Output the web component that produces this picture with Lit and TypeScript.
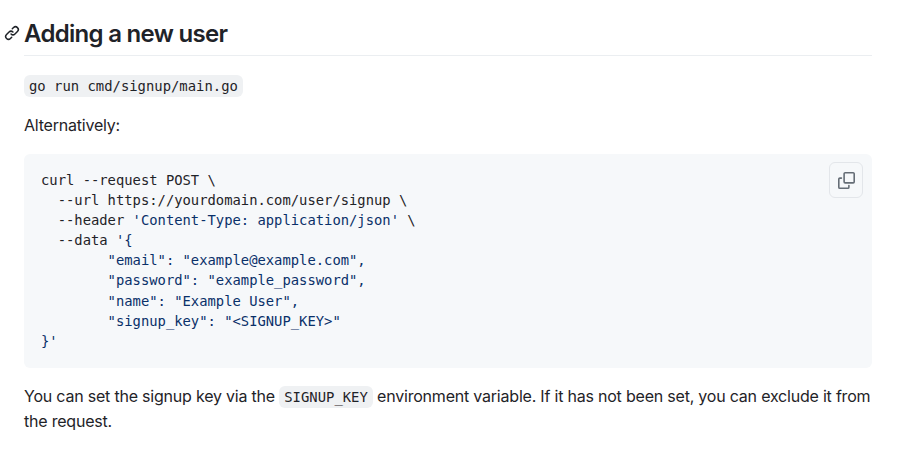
import { LitElement, html, css } from "lit";
import { customElement } from "lit/decorators.js";

@customElement("app-root")
export class AppRoot extends LitElement {
  static styles = css`
    :host {
      display: block;
      width: 899px;
      height: 459px;
      box-sizing: border-box;
      padding: 16px 27px 0 24px;
      background: #fff;
      color: #1f2328;
      font-family: Inter, "Liberation Sans", sans-serif;
      font-size: 16px;
      line-height: 24px;
      letter-spacing: -0.21px;
      overflow: hidden;
    }
    h2 {
      position: relative;
      margin: 0 0 16px;
      height: 34px;
      padding-bottom: 5px;
      border-bottom: 1px solid #d8dee480;
      font-size: 24px;
      line-height: 36px;
      font-weight: 600;
      letter-spacing: -0.7px;
    }
    .anchor {
      position: absolute;
      left: -20px;
      top: 9px;
      width: 16px;
      height: 16px;
      fill: #1f2328;
    }
    p {
      margin: 0 0 16px;
    }
    .cmd {
      height: 24px;
      margin-bottom: 17px;
    }
    .cmd code {
      vertical-align: -1px;
    }
    .alt {
      margin-bottom: 17px;
    }
    code,
    pre {
      font-family: "DejaVu Sans Mono", monospace;
      letter-spacing: 0;
    }
    code {
      background: #eff1f3;
      border-radius: 6px;
      padding: 3px 5px;
      font-size: 13.88px;
    }
    .block {
      position: relative;
      background: #f6f8fa;
      border-radius: 6px;
      padding: 16px 17px 0;
      margin-bottom: 16px;
      height: 214px;
      box-sizing: border-box;
    }
    pre {
      margin: 0;
      font-size: 13.83px;
      line-height: 20.1px;
      color: #1f2328;
    }
    .s {
      color: #0a3069;
    }
    .copy {
      position: absolute;
      top: 8px;
      right: 9px;
      width: 34px;
      height: 36px;
      box-sizing: border-box;
      display: flex;
      align-items: center;
      justify-content: center;
      border: 1px solid #e3e6ea;
      border-radius: 6px;
      background: #f6f8fa;
    }
    .copy svg {
      width: 17px;
      height: 17px;
      fill: #656d76;
    }
  `;

  render() {
    return html`
      <h2>
        <svg class="anchor" viewBox="0 0 16 16">
          <path d="m7.775 3.275 1.25-1.25a3.5 3.5 0 1 1 4.95 4.95l-2.5 2.5a3.5 3.5 0 0 1-4.95 0 .751.751 0 0 1 .018-1.042.751.751 0 0 1 1.042-.018 1.998 1.998 0 0 0 2.83 0l2.5-2.5a2.002 2.002 0 0 0-2.83-2.83l-1.25 1.25a.751.751 0 0 1-1.042-.018.751.751 0 0 1-.018-1.042Zm-4.69 9.64a1.998 1.998 0 0 0 2.83 0l1.25-1.25a.751.751 0 0 1 1.042.018.751.751 0 0 1 .018 1.042l-1.25 1.25a3.5 3.5 0 1 1-4.95-4.95l2.5-2.5a3.5 3.5 0 0 1 4.95 0 .751.751 0 0 1-.018 1.042.751.751 0 0 1-1.042.018 1.998 1.998 0 0 0-2.83 0l-2.5 2.5a1.998 1.998 0 0 0 0 2.83Z"></path>
        </svg>
        Adding a new user
      </h2>
      <p class="cmd"><code>go run cmd/signup/main.go</code></p>
      <p class="alt">Alternatively:</p>
      <div class="block">
        <pre>curl --request POST \\
  --url https://yourdomain.com/user/signup \\
  --header <span class="s">'Content-Type: application/json'</span> \\
  --data <span class="s">'{
        "email": "example@example.com",
        "password": "example_password",
        "name": "Example User",
        "signup_key": "&lt;SIGNUP_KEY&gt;"</span>
<span class="s">}'</span></pre>
        <div class="copy">
          <svg viewBox="0 0 16 16">
            <path d="M0 6.75C0 5.784.784 5 1.75 5h1.5a.75.75 0 0 1 0 1.5h-1.5a.25.25 0 0 0-.25.25v7.5c0 .138.112.25.25.25h7.5a.25.25 0 0 0 .25-.25v-1.5a.75.75 0 0 1 1.5 0v1.5A1.75 1.75 0 0 1 9.25 16h-7.5A1.75 1.75 0 0 1 0 14.25Z"></path>
            <path d="M5 1.75C5 .784 5.784 0 6.75 0h7.5C15.216 0 16 .784 16 1.75v7.5A1.75 1.75 0 0 1 14.25 11h-7.5A1.75 1.75 0 0 1 5 9.25Zm1.75-.25a.25.25 0 0 0-.25.25v7.5c0 .138.112.25.25.25h7.5a.25.25 0 0 0 .25-.25v-7.5a.25.25 0 0 0-.25-.25Z"></path>
          </svg>
        </div>
      </div>
      <p>You can set the signup key via the <code>SIGNUP_KEY</code> environment variable. If it has not been set, you can exclude it from the request.</p>
    `;
  }
}
